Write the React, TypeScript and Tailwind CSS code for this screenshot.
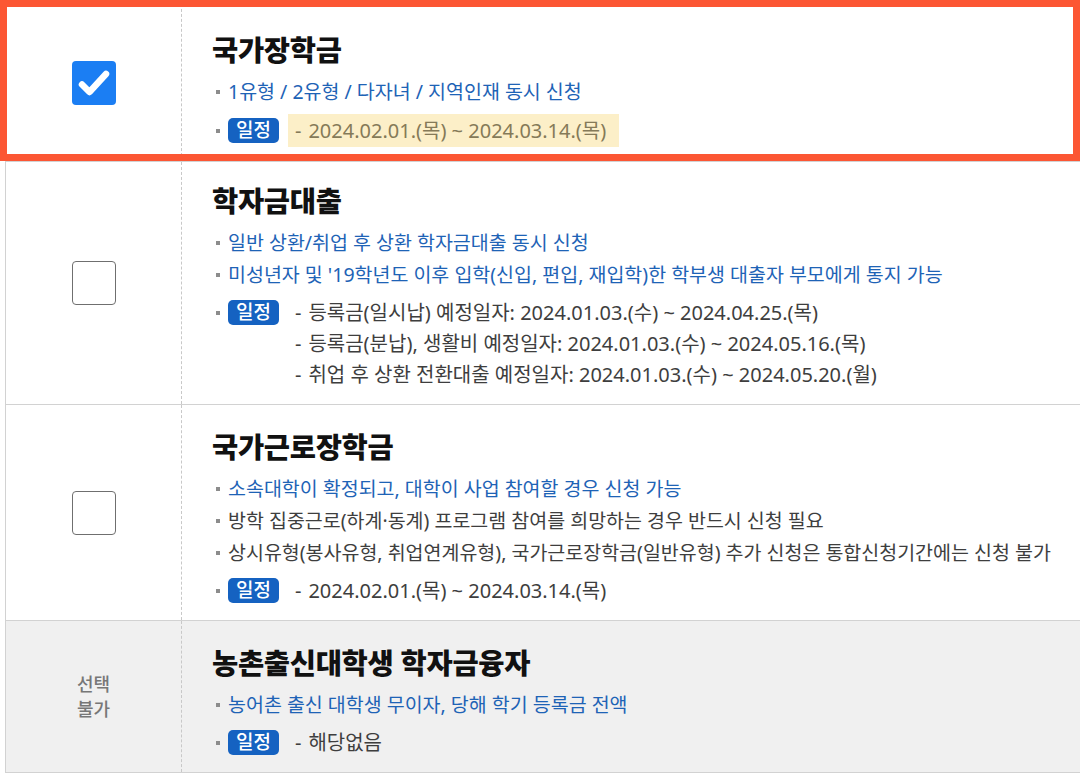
const font = "font-['Noto_Sans','Noto_Sans_CJK_KR',sans-serif]";

type Line = { text: string; blue?: boolean };

type Item = {
  title: string;
  lines: Line[];
  dates: string[];
  state: "checked" | "empty" | "disabled";
  highlight?: boolean;
  pt: string;
  bg?: string;
};

const items: Item[] = [
  {
    title: "국가장학금",
    lines: [{ text: "1유형 / 2유형 / 다자녀 / 지역인재 동시 신청", blue: true }],
    dates: ["2024.02.01.(목) ~ 2024.03.14.(목)"],
    state: "checked",
    highlight: true,
    pt: "pt-[28px]",
  },
  {
    title: "학자금대출",
    lines: [
      { text: "일반 상환/취업 후 상환 학자금대출 동시 신청", blue: true },
      {
        text: "미성년자 및 '19학년도 이후 입학(신입, 편입, 재입학)한 학부생 대출자 부모에게 통지 가능",
        blue: true,
      },
    ],
    dates: [
      "등록금(일시납) 예정일자: 2024.01.03.(수) ~ 2024.04.25.(목)",
      "등록금(분납), 생활비 예정일자: 2024.01.03.(수) ~ 2024.05.16.(목)",
      "취업 후 상환 전환대출 예정일자: 2024.01.03.(수) ~ 2024.05.20.(월)",
    ],
    state: "empty",
    pt: "pt-[21px]",
  },
  {
    title: "국가근로장학금",
    lines: [
      { text: "소속대학이 확정되고, 대학이 사업 참여할 경우 신청 가능", blue: true },
      { text: "방학 집중근로(하계·동계) 프로그램 참여를 희망하는 경우 반드시 신청 필요" },
      {
        text: "상시유형(봉사유형, 취업연계유형), 국가근로장학금(일반유형) 추가 신청은 통합신청기간에는 신청 불가",
      },
    ],
    dates: ["2024.02.01.(목) ~ 2024.03.14.(목)"],
    state: "empty",
    pt: "pt-[24px]",
  },
  {
    title: "농촌출신대학생 학자금융자",
    lines: [{ text: "농어촌 출신 대학생 무이자, 당해 학기 등록금 전액", blue: true }],
    dates: ["해당없음"],
    state: "disabled",
    pt: "pt-[24px]",
    bg: "bg-[#f0f0f0]",
  },
];

function Marker() {
  return <span className="ml-[4px] mr-[8px] h-[4px] w-[4px] shrink-0 bg-[#8c8c8c]" />;
}

function Check({ state }: { state: Item["state"] }) {
  if (state === "checked") {
    return (
      <span className="flex h-[44px] w-[44px] items-center justify-center rounded-[4px] bg-[#1b7ef3]">
        <svg width="44" height="44" viewBox="0 0 44 44" fill="none">
          <path
            d="M10 23.5 L17.5 31 L34 13"
            stroke="white"
            strokeWidth="6.5"
            strokeLinecap="round"
            strokeLinejoin="round"
          />
        </svg>
      </span>
    );
  }
  if (state === "empty") {
    return <span className="h-[44px] w-[44px] rounded-[4px] border-[1.5px] border-[#6f6f6f] bg-white" />;
  }
  return (
    <span className="text-center text-[18px] font-medium leading-[25px] text-[#777]">
      선택
      <br />
      불가
    </span>
  );
}

function Dated({ text }: { text: string }) {
  return (
    <>
      <span className="mr-[7px]">-</span>
      {text}
    </>
  );
}

function Row({ item }: { item: Item }) {
  return (
    <div className={`grid grid-cols-[176px_1fr] border-b border-[#d2d2d2] ${item.bg ?? "bg-white"}`}>
      <div className="flex items-center justify-center border-r border-dashed border-[#c8c8c8]">
        <Check state={item.state} />
      </div>
      <div className={`pl-[30px] pb-[14px] ${item.pt}`}>
        <h2 className="h-[36px] whitespace-nowrap text-[28.5px] font-extrabold leading-[36px] tracking-[-0.3px] text-[#111]">
          {item.title}
        </h2>
        <ul className="mt-[8px]">
          {item.lines.map((l) => (
            <li
              key={l.text}
              className={`flex h-[32px] items-center text-[19.5px] ${l.blue ? "text-[#1e63b6]" : "text-[#3e3e3e]"}`}
            >
              <Marker />
              <span className="whitespace-nowrap">{l.text}</span>
            </li>
          ))}
          <li className="mt-[6px] flex items-start">
            <span className={`flex items-center ${item.highlight ? "h-[33px]" : "h-[31px]"}`}>
              <Marker />
              <span className="flex h-[25px] items-center rounded-[5px] bg-[#1562c1] px-[8px] text-[19px] font-medium leading-none text-white">
                일정
              </span>
            </span>
            {item.highlight ? (
              <span className="ml-[9px] flex h-[33px] items-center whitespace-nowrap bg-[#fcefc8] pl-[7px] pr-[13px] text-[20px] text-[#857a58]">
                <Dated text={item.dates[0]} />
              </span>
            ) : (
              <div className="ml-[16px] text-[20px] leading-[31px] text-[#3e3e3e]">
                {item.dates.map((d) => (
                  <div key={d} className="whitespace-nowrap">
                    <Dated text={d} />
                  </div>
                ))}
              </div>
            )}
          </li>
        </ul>
      </div>
    </div>
  );
}

export default function App() {
  return (
    <div className={`${font} relative h-[776px] w-[1080px] overflow-hidden bg-white pt-[4px]`}>
      <div className="ml-[5px] w-[1100px] border-l border-[#d2d2d2]">
        {items.map((item) => (
          <Row key={item.title} item={item} />
        ))}
      </div>
      <div className="pointer-events-none absolute left-0 top-0 h-[161px] w-[1080px] border-[7px] border-[#fc5633]" />
    </div>
  );
}
